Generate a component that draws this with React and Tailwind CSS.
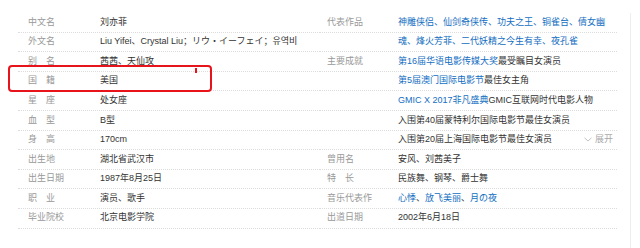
import React from "react";

const font = { fontFamily: '"Liberation Sans", "Noto Sans CJK SC", sans-serif' };

function Label({ text }) {
  const chars = [...text];
  if (chars.length === 2) {
    return (
      <span className="flex w-[27px] justify-between text-[#999]">
        <span>{chars[0]}</span>
        <span>{chars[1]}</span>
      </span>
    );
  }
  return <span className="text-[#999] whitespace-nowrap">{text}</span>;
}

const A = ({ children }) => <span className="text-[#136ec2]">{children}</span>;

function Row({ label, labelW, children, extra }) {
  return (
    <div className="flex h-[19.6px] items-center border-b border-dotted border-[#dcdcdc]">
      <div className={labelW}>{label ? <Label text={label} /> : null}</div>
      <div className="flex-1 whitespace-nowrap text-[#333]">{children}</div>
      {extra}
    </div>
  );
}

export default function App() {
  const left = [
    ["中文名", "刘亦菲"],
    ["外文名", "Liu Yifei、Crystal Liu；リウ・イーフェイ；유역비"],
    ["别名", "茜茜、天仙攻"],
    ["国籍", "美国"],
    ["星座", "处女座"],
    ["血型", "B型"],
    ["身高", "170cm"],
    ["出生地", "湖北省武汉市"],
    ["出生日期", "1987年8月25日"],
    ["职业", "演员、歌手"],
    ["毕业院校", "北京电影学院"],
  ];
  const lw = "w-[82px] pl-[10px] shrink-0";
  const rw = "w-[78px] pl-[7px] shrink-0";
  return (
    <div className="relative h-[248px] w-[640px] overflow-hidden bg-white text-[9px]" style={font}>
      <div className="flex pt-[13px]">
        <div className="ml-[18px] w-[302px]">
          {left.map(([l, v]) => (
            <Row key={l} label={l} labelW={lw}>
              {v}
            </Row>
          ))}
        </div>
        <div className="w-[297px]">
          <Row label="代表作品" labelW={rw}>
            <A>神雕侠侣、仙剑奇侠传、功夫之王、铜雀台、倩女幽</A>
          </Row>
          <Row labelW={rw}>
            <A>魂、烽火芳菲、二代妖精之今生有幸、夜孔雀</A>
          </Row>
          <Row label="主要成就" labelW={rw}>
            <A>第16届华语电影传媒大奖</A>最受瞩目女演员
          </Row>
          <Row labelW={rw}>
            <A>第5届澳门国际电影节</A>最佳女主角
          </Row>
          <Row labelW={rw}>
            <A>GMIC X 2017非凡盛典</A>GMIC互联网时代电影人物
          </Row>
          <Row labelW={rw}>入围第40届蒙特利尔国际电影节最佳女演员</Row>
          <Row
            labelW={rw}
            extra={
              <span className="mr-[4px] flex items-center gap-[3px] text-[#aaa]">
                <svg width="8" height="5" viewBox="0 0 8 5" fill="none">
                  <path d="M0.5 0.8 L4 4 L7.5 0.8" stroke="#bbb" strokeWidth="0.9" />
                </svg>
                展开
              </span>
            }
          >
            入围第20届上海国际电影节最佳女演员
          </Row>
          <Row label="曾用名" labelW={rw}>安风、刘茜美子</Row>
          <Row label="特长" labelW={rw}>民族舞、钢琴、爵士舞</Row>
          <Row label="音乐代表作" labelW={rw}>
            <A>心悸</A>、<A>放飞美丽</A>、<A>月の夜</A>
          </Row>
          <Row label="出道日期" labelW={rw}>2002年6月18日</Row>
        </div>
        <div className="ml-[13px] h-[248px] w-px bg-[#eeeeee]" />
      </div>
      <div className="absolute left-[8px] top-[65px] h-[27px] w-[204px] rounded-[4px] border-2 border-[#e8141c]" />
      <div className="absolute left-[195px] top-[68px] h-[5px] w-[2px] bg-[#e8141c]" />
    </div>
  );
}
